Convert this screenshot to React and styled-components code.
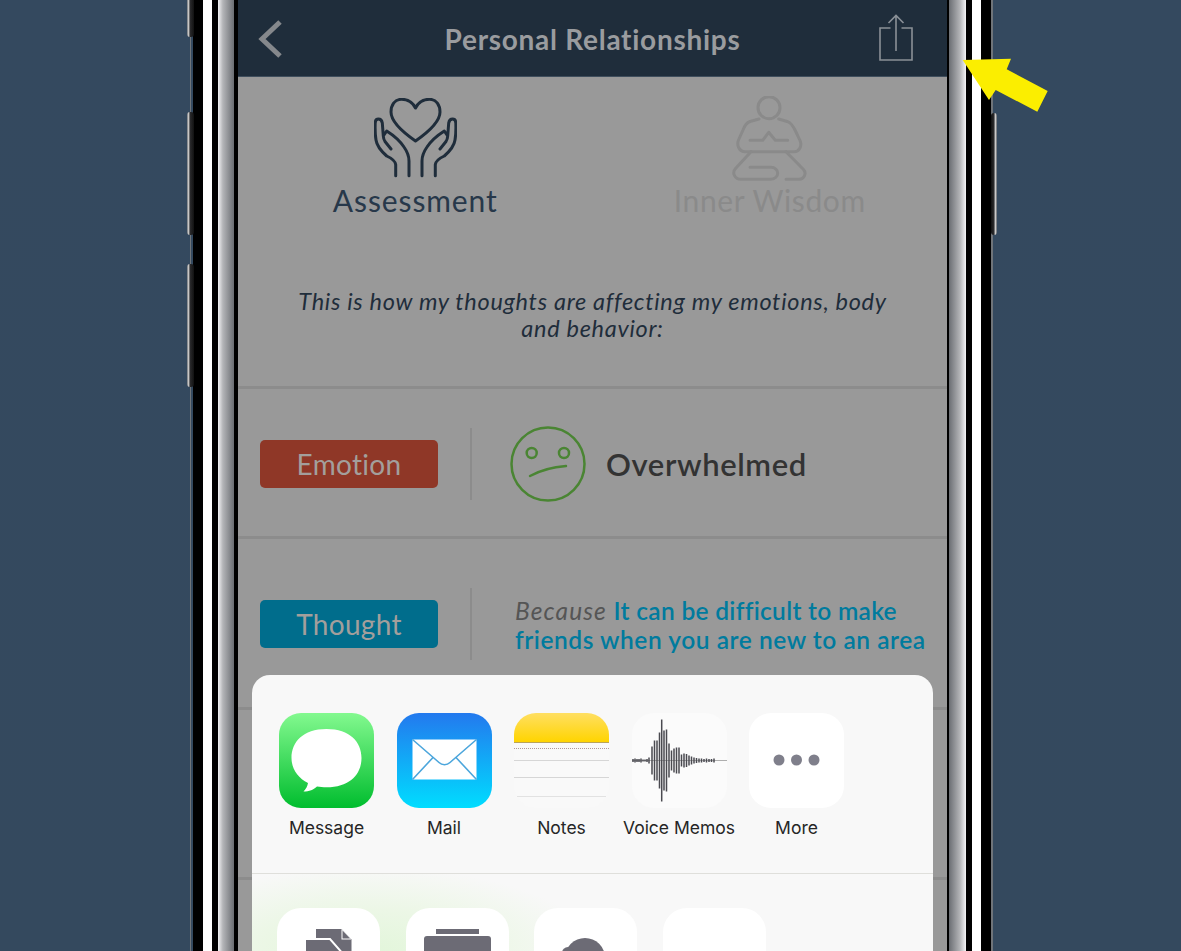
import React from "react";
import styled, { createGlobalStyle } from "styled-components";

const Global = createGlobalStyle`
  html, body { margin: 0; padding: 0; background: #34495e; }
  #root { width: 1181px; height: 951px; overflow: hidden; }
`;

const Page = styled.div`
  position: relative;
  width: 1181px;
  height: 951px;
  overflow: hidden;
  display: flex;
  padding-left: 193px;
  box-sizing: border-box;
  background: linear-gradient(180deg, #34495f 0%, #34495e 100%);
  font-family: Lato, "Open Sans", sans-serif;
`;

const Band = styled.div`
  flex: 0 0 ${(p) => p.$w}px;
  height: 100%;
  background: ${(p) => p.$bg};
`;

const Screen = styled.div`
  position: relative;
  flex: 0 0 709px;
  height: 100%;
  overflow: hidden;
  background: #999999;
`;

const SideButton = styled.div`
  position: absolute;
  top: ${(p) => p.$top}px;
  left: ${(p) => p.$left}px;
  width: 7px;
  height: ${(p) => p.$h}px;
  border-radius: 3px;
  background: linear-gradient(90deg, #6d7176 0%, #c9c9c9 22%, #2a2a2c 45%, #111 100%);
`;

const RightButton = styled(SideButton)`
  width: 6px;
  background: linear-gradient(90deg, #111 0%, #2a2a2c 45%, #c9c9c9 75%, #5d6166 100%);
`;

const Rail = styled.div`
  position: absolute;
  top: 0;
  bottom: 0;
  left: ${(p) => p.$left}px;
  width: 1px;
  background: #6f7479;
`;

const Arrow = styled.svg`
  position: absolute;
  left: 955px;
  top: 50px;
`;

const Header = styled.header`
  height: 76px;
  display: grid;
  grid-template-columns: 1fr auto 1fr;
  align-items: center;
  background: #1f2d3b;
  border-bottom: 1px solid #3f4e5d;
`;

const BackIcon = styled.svg`
  margin-left: 20px;
  margin-top: 2px;
`;

const ShareIcon = styled.svg`
  justify-self: end;
  margin-right: 34px;
`;

const Title = styled.h1`
  margin: 2px 0 0;
  font-size: 28px;
  font-weight: 700;
  color: #9a9c9f;
  letter-spacing: 0.72px;
`;

const Tabs = styled.div`
  display: grid;
  grid-template-columns: 1fr 1fr;
  height: 190px;
`;

const Tab = styled.div`
  display: flex;
  flex-direction: column;
  align-items: center;
  padding-top: ${(p) => p.$pad}px;
`;

const TabLabel = styled.div`
  font-size: 30px;
  line-height: 36px;
  letter-spacing: ${(p) => p.$ls}px;
  margin-top: ${(p) => p.$gap}px;
  color: ${(p) => p.$color};
`;

const Intro = styled.p`
  margin: 0;
  height: 119px;
  padding-top: 21px;
  box-sizing: border-box;
  font-style: italic;
  font-size: 23.5px;
  letter-spacing: 0.7px;
  line-height: 27px;
  text-align: center;
  color: #1f2d3b;
`;

const Row = styled.div`
  box-sizing: border-box;
  height: ${(p) => p.$h}px;
  padding-top: ${(p) => p.$pt || 0}px;
  padding-left: 22px;
  border-top: 3px solid #8c8c8c;
  display: flex;
  align-items: center;
`;

const Pill = styled.div`
  flex: 0 0 178px;
  height: 48px;
  border-radius: 5px;
  background: ${(p) => p.$bg};
  color: #a39f9c;
  display: flex;
  align-items: center;
  justify-content: center;
  font-size: 28px;
  letter-spacing: 0.3px;
`;

const VRule = styled.div`
  flex: 0 0 2px;
  height: 72px;
  margin: 0 38px 0 32px;
  background: #8c8c8c;
`;

const Mood = styled.div`
  display: flex;
  align-items: center;
  gap: 20px;
  font-size: 31px;
  font-weight: 600;
  letter-spacing: 0.6px;
  color: #333333;
`;

const Thought = styled.div`
  margin: 2px 0 0 5px;
  font-size: 24.5px;
  line-height: 29px;
  font-weight: 600;
  letter-spacing: 0.55px;
  color: #007b9e;
  white-space: nowrap;
`;

const Because = styled.em`
  font-weight: 400;
  letter-spacing: 1.1px;
  color: #555555;
`;

const Tightened = styled.span`
  letter-spacing: 0.3px;
`;

const Sheet = styled.section`
  position: absolute;
  top: 675px;
  left: 14px;
  right: 14px;
  height: 320px;
  border-radius: 18px 18px 0 0;
  overflow: hidden;
  background: #f8f8f8;
  font-family: Inter, Roboto, sans-serif;
`;

const AppsRow = styled.div`
  height: 199px;
  box-sizing: border-box;
  padding: 38px 0 0 27px;
  display: flex;
  gap: 22.5px;
  border-bottom: 1.5px solid #dfdfdb;
`;

const AppCell = styled.div`
  width: 95px;
  display: flex;
  flex-direction: column;
  align-items: center;
  gap: 9px;
`;

const AppTile = styled.div`
  width: 95px;
  height: 95px;
  border-radius: 22px;
  overflow: hidden;
  background: ${(p) => p.$bg};
  svg { display: block; }
`;

const AppLabel = styled.span`
  font-size: 17.5px;
  line-height: 22px;
  color: #262626;
  white-space: nowrap;
`;

const ActionsRow = styled.div`
  padding: 34px 0 0 25px;
  height: 200px;
  box-sizing: border-box;
  display: flex;
  gap: 25.5px;
  background: radial-gradient(ellipse 230px 85px at 115px 78px, #e2f6da 0%, #ecf7e6 50%, rgba(248, 248, 248, 0) 100%);
`;

const ActionTile = styled.div`
  width: 103px;
  height: 103px;
  border-radius: 24px;
  background: #ffffff;
  svg { display: block; }
`;

const bars = [
  [1, 1.5], [3, 2], [5, 1.5], [7, 1.5], [9, 2], [11, 1], [13, 1], [15, 1.5], [17, 3],
  [20, 14], [22.5, 20], [25, 20], [27.5, 28], [29.7, 41], [32, 30], [34.5, 31], [37, 17],
  [39.5, 10], [42, 12], [44.5, 13], [47, 13], [49.5, 6], [52, 7], [54.5, 6.5], [57, 5],
  [59.5, 4], [62, 3], [64.5, 2.5], [67, 2], [69.5, 2], [72, 1.5], [74.5, 2], [77, 1.5], [79.5, 1.5], [82, 2],
];

const hand = "M21.7 77.7V66.7C21.5 63 17 60 12.7 58C7 53 2.7 47 2 42C1 36 1 30 1.2 25C1.3 22.5 2.6 21 4.3 21C6.6 21 8 23 8.3 25L9.3 38L12.7 33C19 37 26 43 30 49C33.5 54 35 58 35 63V77.7M9.3 38C9.5 41 10 42 11 43.5L17 51";

function Hands() {
  return (
    <svg width="83" height="80" viewBox="0 0 83 80" fill="none" stroke="#1f2d3b" strokeWidth="3" strokeLinecap="round" strokeLinejoin="round">
      <path d="M41.5 10C38.5 4 33 1.3 27.5 1.3C20.5 1.3 17 7.5 17 14C17 24 30 35 41.5 43C53 35 66 24 66 14C66 7.5 62.5 1.3 55.5 1.3C50 1.3 44.5 4 41.5 10Z" />
      <path d={hand} />
      <g transform="matrix(-1 0 0 1 83 0)">
        <path d={hand} />
      </g>
    </svg>
  );
}

function Meditate() {
  return (
    <svg width="75" height="85" viewBox="0 0 75 85" fill="none" stroke="#8a8a8a" strokeWidth="3" strokeLinecap="round" strokeLinejoin="round">
      <circle cx="37" cy="11.7" r="11" />
      <path d="M27 23L18 25.5C14 27 12.5 30 11 34L6.5 44C4.5 49 7 55.7 13 55.7H62C67 55.7 70.5 50 68 44.5L63 34C61 30 59.5 27 56 25.8L46.7 23" />
      <path d="M18 44.3H30.7L36.7 36.3L43.3 44.3H55.7" />
      <path d="M19 55.7L3.5 72.5C-0.5 77 3 83.3 9 83.3H38C43 83.3 45.7 80.5 45.7 77C45.7 74 43 71.3 39 71.3H18" />
      <path d="M54 55.7L71.5 73.5C75 77.5 72 83.3 67 83.3H54" />
    </svg>
  );
}

function Smiley() {
  return (
    <svg width="76" height="76" viewBox="0 0 76 76" fill="none" stroke="#4a8533" strokeWidth="2.5" strokeLinecap="round">
      <circle cx="38" cy="38" r="36.5" />
      <circle cx="21.7" cy="27" r="5" />
      <circle cx="54" cy="27" r="5" />
      <path d="M20 50C30 44.5 43 41 56 40" />
    </svg>
  );
}

export default function App() {
  return (
    <Page>
      <Global />
      <Rail $left={190} />
      <SideButton $left={187} $top={-10} $h={47} />
      <SideButton $left={187} $top={112} $h={123} />
      <SideButton $left={187} $top={264} $h={123} />
      <RightButton $left={991} $top={113} $h={122} />
      <Band $w={10} $bg="#000" />
      <Band $w={9} $bg="#fff" />
      <Band $w={6} $bg="#000" />
      <Band $w={16} $bg="linear-gradient(90deg, #f4f4f6 0%, #b4b5b8 30%, #6b6e73 100%)" />
      <Band $w={4} $bg="#000" />
      <Screen>
        <Header>
          <BackIcon width="26" height="38" viewBox="0 0 26 38" fill="none" stroke="#85888c" strokeWidth="5">
            <path d="M22 2L4 19L22 36" />
          </BackIcon>
          <Title>Personal Relationships</Title>
          <ShareIcon width="34" height="48" viewBox="0 0 34 48" fill="none" stroke="#8a9097" strokeWidth="1.6">
            <path d="M11.5 14H1V46H33V14H22.5" />
            <path d="M17 37V2M9.5 9L17 1.5L24.5 9" />
          </ShareIcon>
        </Header>
        <Tabs>
          <Tab $pad={21}>
            <Hands />
            <TabLabel $color="#27384a" $gap={4} $ls={0.9}>Assessment</TabLabel>
          </Tab>
          <Tab $pad={19}>
            <Meditate />
            <TabLabel $color="#8a8a8a" $gap={1} $ls={0.6}>Inner Wisdom</TabLabel>
          </Tab>
        </Tabs>
        <Intro>
          This is how my thoughts are affecting my emotions, body
          <br />
          and behavior:
        </Intro>
        <Row $h={150} $pt={3}>
          <Pill $bg="#8f3727">Emotion</Pill>
          <VRule />
          <Mood>
            <Smiley />
            Overwhelmed
          </Mood>
        </Row>
        <Row $h={171} $pt={2}>
          <Pill $bg="#006d8c">Thought</Pill>
          <VRule />
          <Thought>
            <Because>Because</Because> <Tightened>It can be difficult to make</Tightened>
            <br />
            friends when you are new to an area
          </Thought>
        </Row>
        <Row $h={170} />
        <Row $h={70} />
        <Sheet>
          <AppsRow>
            <AppCell>
              <AppTile $bg="linear-gradient(180deg, #83f98f 0%, #00bd2e 100%)">
                <svg width="95" height="95" viewBox="0 0 95 95">
                  <path fill="#fff" d="M47.5 16C24 16 12.5 29 12.5 45C12.5 56 19 65 29 70C28.5 73 27 76 24.5 78.5C30 78.5 35 76.5 38 73.5C41 74 44 74.3 47.5 74.3C71 74.3 82.5 61 82.5 45C82.5 29 71 16 47.5 16Z" />
                </svg>
              </AppTile>
              <AppLabel>Message</AppLabel>
            </AppCell>
            <AppCell>
              <AppTile $bg="linear-gradient(180deg, #2379ee 0%, #00ddff 100%)">
                <svg width="95" height="95" viewBox="0 0 95 95" fill="none">
                  <rect x="15.5" y="26.5" width="64" height="40" fill="#fff" />
                  <path d="M15.5 26.5L42 49.5C45 52.5 50 52.5 53 49.5L79.5 26.5M15.5 66.5L36 44.5M79.5 66.5L59 44.5" stroke="#4ca6dc" strokeWidth="1.6" />
                </svg>
              </AppTile>
              <AppLabel>Mail</AppLabel>
            </AppCell>
            <AppCell>
              <AppTile $bg="#f9f9f9">
                <svg width="95" height="95" viewBox="0 0 95 95" fill="none">
                  <defs>
                    <linearGradient id="noteTop" x1="0" y1="0" x2="0" y2="1">
                      <stop offset="0" stopColor="#ffdf62" />
                      <stop offset="1" stopColor="#ffd400" />
                    </linearGradient>
                  </defs>
                  <rect width="95" height="29" fill="url(#noteTop)" />
                  <path d="M0 29.5H95" stroke="#b9a35a" strokeWidth="1" />
                  <path d="M0 35.5H95" stroke="#b09a9a" strokeWidth="1" strokeDasharray="1 1" />
                  <path d="M0 47.5H95M0 64.5H95" stroke="#d6d6d6" strokeWidth="1" />
                  <path d="M3 83.5H92" stroke="#e2e2e2" strokeWidth="1" />
                </svg>
              </AppTile>
              <AppLabel>Notes</AppLabel>
            </AppCell>
            <AppCell>
              <AppTile $bg="#fbfbfb">
                <svg width="95" height="95" viewBox="0 0 95 95">
                  <path d="M0 47.5H95" stroke="#9a9a9a" strokeWidth="0.8" />
                  {bars.map(([x, h]) => (
                    <rect key={x} x={x - 0.75} y={47.5 - h} width={1.5} height={h * 2} fill="#4a4a50" />
                  ))}
                </svg>
              </AppTile>
              <AppLabel>Voice Memos</AppLabel>
            </AppCell>
            <AppCell>
              <AppTile $bg="#ffffff">
                <svg width="95" height="95" viewBox="0 0 95 95" fill="#7f7f8b">
                  <circle cx="30" cy="47" r="5.5" />
                  <circle cx="47.5" cy="47" r="5.5" />
                  <circle cx="65" cy="47" r="5.5" />
                </svg>
              </AppTile>
              <AppLabel>More</AppLabel>
            </AppCell>
          </AppsRow>
          <ActionsRow>
            <ActionTile>
              <svg width="103" height="103" viewBox="0 0 103 103" fill="#6c6b75">
                <path d="M39 21H64.5L74.5 31.5V60H39Z" />
                <path d="M64.5 21L74.5 31.5H64.5Z" fill="#fff" />
                <path d="M65.5 22.5L73 30.5H65.5Z" fill="#6c6b75" />
                <path d="M28 31H53L67 47V75H28Z" stroke="#fff" strokeWidth="2" />
              </svg>
            </ActionTile>
            <ActionTile>
              <svg width="103" height="103" viewBox="0 0 103 103" fill="#6c6b75">
                <rect x="30" y="21" width="43" height="5" />
                <rect x="18" y="28" width="67" height="50" rx="3" />
              </svg>
            </ActionTile>
            <ActionTile>
              <svg width="103" height="103" viewBox="0 0 103 103" fill="#6c6b75">
                <circle cx="51" cy="50" r="20" />
                <circle cx="34" cy="45" r="6" />
                <rect x="28" y="45" width="40" height="30" />
              </svg>
            </ActionTile>
            <ActionTile />
          </ActionsRow>
        </Sheet>
      </Screen>
      <Band $w={2} $bg="#000" />
      <Band $w={17} $bg="linear-gradient(90deg, #6b6e73 0%, #b4b5b8 65%, #f4f4f6 100%)" />
      <Band $w={6} $bg="#000" />
      <Band $w={9} $bg="#fff" />
      <Band $w={10} $bg="#000" />
      <Band $w={2} $bg="#6f7479" />
      <Arrow width="100" height="70" viewBox="955 50 100 70">
        <polygon fill="#fbee00" points="962.7,60 1011,58.7 1006.7,69.3 1047.7,91 1037.3,111.7 995.7,90 989,100" />
      </Arrow>
    </Page>
  );
}
